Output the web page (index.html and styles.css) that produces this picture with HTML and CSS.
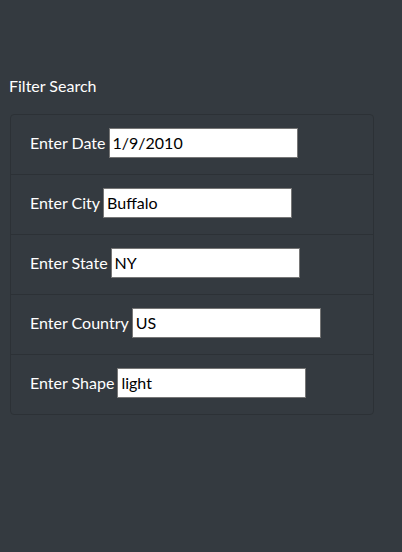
FILE: index.html
```html
<!DOCTYPE html>
<html>
<head>
<meta charset="utf-8">
<link rel="stylesheet" href="styles.css">
</head>
<body>
<div class="page">
  <h5 class="title">Filter Search</h5>
  <ul class="filters">
    <li class="filter"><label for="date">Enter Date</label><input id="date" type="text" value="1/9/2010"></li>
    <li class="filter"><label for="city">Enter City</label><input id="city" type="text" value="Buffalo"></li>
    <li class="filter"><label for="state">Enter State</label><input id="state" type="text" value="NY"></li>
    <li class="filter"><label for="country">Enter Country</label><input id="country" type="text" value="US"></li>
    <li class="filter"><label for="shape">Enter Shape</label><input id="shape" type="text" value="light"></li>
  </ul>
</div>
</body>
</html>
```
FILE: styles.css
```css
html, body {
  margin: 0;
  padding: 0;
  background: #343a40;
  height: 100%;
}
body {
  font-family: Lato, "Open Sans", sans-serif;
  font-size: 16px;
  line-height: 24px;
  color: #ffffff;
}
.page {
  padding: 74px 28px 0 9px;
}
.title {
  margin: 0;
  font-size: 16px;
  font-weight: 400;
  line-height: 24px;
}
.filters {
  list-style: none;
  margin: 16px 0 0 1px;
  padding: 0;
  width: 364px;
  border: 1px solid #2c3136;
  border-radius: 4px;
  box-sizing: border-box;
}
.filter {
  display: flex;
  align-items: center;
  height: 60px;
  box-sizing: border-box;
  padding: 0 0 4px 19px;
  border-top: 1px solid #2c3136;
}
.filter:first-child {
  border-top: none;
  height: 59px;
}
.filter label {
  margin-right: 3px;
}
.filter input {
  box-sizing: border-box;
  width: 189px;
  height: 30px;
  margin: 0;
  padding: 0 3px;
  border: 1px solid #767676;
  background: #ffffff;
  color: #000000;
  font-family: inherit;
  font-size: 16px;
  outline: none;
}
```
